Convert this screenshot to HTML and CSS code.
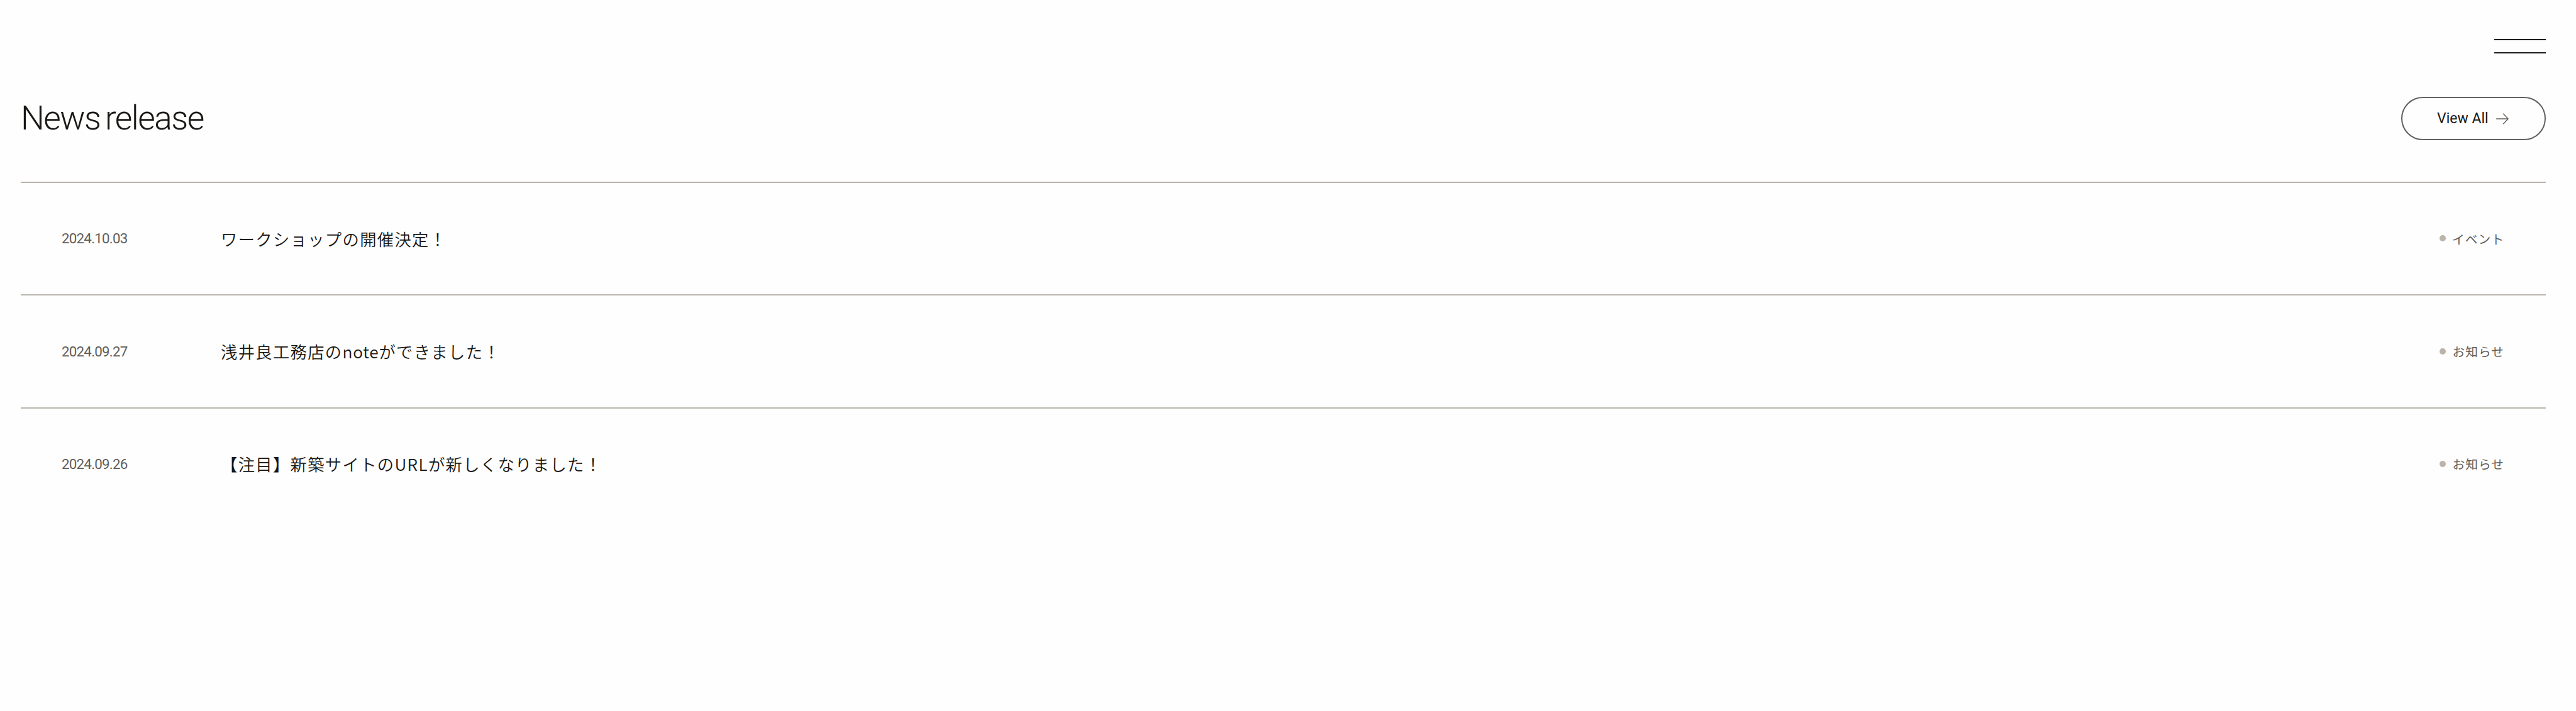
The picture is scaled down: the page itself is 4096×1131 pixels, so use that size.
FILE: index.html
```html
<!DOCTYPE html>
<html lang="ja">
<head>
<meta charset="utf-8">
<title>News release</title>
<link rel="stylesheet" href="styles.css">
</head>
<body>
<header class="header">
  <button class="menu" aria-label="Menu"><span class="menu-bar"></span><span class="menu-bar"></span></button>
</header>
<main class="news">
  <div class="news-head">
    <h2 class="news-title">News release</h2>
    <a class="view-all"><span class="view-all-label">View All</span>
      <svg class="arrow" viewBox="0 0 24 22" fill="none" stroke="currentColor" stroke-width="1.6"><path d="M0 11H23M13.5 1L23.2 11L13.5 21"/></svg>
    </a>
  </div>
  <ul class="news-list">
    <li class="news-item"><time class="date">2024.10.03</time><a class="subject">ワークショップの開催決定！</a><span class="tag">イベント</span></li>
    <li class="news-item"><time class="date">2024.09.27</time><a class="subject">浅井良工務店の<span class="latin">note</span>ができました！</a><span class="tag">お知らせ</span></li>
    <li class="news-item"><time class="date">2024.09.26</time><a class="subject">【注目】新築サイトのURLが新しくなりました！</a><span class="tag">お知らせ</span></li>
  </ul>
</main>
</body>
</html>
```
FILE: styles.css
```css
* { box-sizing: border-box; }
body {
  margin: 0;
  padding: 0 48px 0 33px;
  min-height: 1131px;
  background: #fefefe;
  color: #1a1814;
  font-family: Roboto, "Noto Sans CJK JP", sans-serif;
}
.header {
  display: flex;
  justify-content: flex-end;
  height: 154px;
  padding-top: 62px;
}
.menu {
  display: flex;
  flex-direction: column;
  gap: 19px;
  width: 82px;
  height: 23px;
  padding: 0;
  border: 0;
  background: none;
}
.menu-bar { height: 2px; width: 100%; background: #1d1c1c; }
.news-head {
  display: flex;
  align-items: center;
  justify-content: space-between;
  height: 69px;
}
.news-title {
  margin: 0;
  font-size: 53.3px;
  font-weight: 300;
  line-height: 69px;
  letter-spacing: -1.55px;
  word-spacing: -4px;
}
.view-all {
  display: flex;
  align-items: center;
  gap: 13px;
  width: 230px;
  height: 69px;
  padding-left: 55px;
  border: 2px solid #625f5d;
  border-radius: 35px;
}
.view-all-label {
  width: 81px;
  padding-top: 1px;
  font-size: 23px;
  font-weight: 400;
  line-height: 30px;
  white-space: nowrap;
}
.arrow { width: 20px; height: 18px; color: #5f5b57; }
.news-list { margin: 66px 0 0; padding: 0; list-style: none; }
.news-item {
  display: flex;
  align-items: center;
  height: 179.4px;
  padding: 0 66px 0 65px;
  border-top: 2px solid #bbb6ae;
}
.date {
  width: 253px;
  padding-bottom: 1px;
  font-size: 22.4px;
  letter-spacing: -0.8px;
  color: #625e5a;
}
.subject {
  flex: 1;
  font-family: "Noto Sans CJK JP", sans-serif;
  font-size: 26.33px;
  font-weight: 350;
  line-height: 40px;
  letter-spacing: 1.317px;
}
.latin { letter-spacing: 0.7px; }
.tag {
  display: flex;
  align-items: center;
  gap: 10px;
  padding-bottom: 1px;
  font-family: "Noto Sans CJK JP", sans-serif;
  font-size: 19.75px;
  letter-spacing: 0.99px;
  color: #625e5a;
}
.tag::before {
  content: "";
  width: 10px;
  height: 10px;
  border-radius: 50%;
  background: #bcb3a9;
}
```
